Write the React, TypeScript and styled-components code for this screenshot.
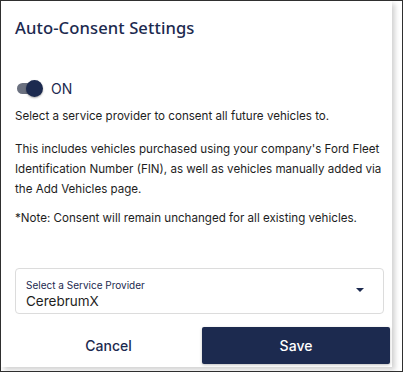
import React, { useState } from 'react';
import styled, { createGlobalStyle } from 'styled-components';

const GlobalStyle = createGlobalStyle`
  html, body {
    margin: 0;
    padding: 0;
    background: #ffffff;
  }
  * { box-sizing: border-box; }
`;

const navy = '#1c2a4f';

const Frame = styled.div`
  width: 403px;
  height: 372px;
  border: 1px solid #2f2f2f;
  background: #ffffff;
  overflow: hidden;
`;

const Card = styled.div`
  width: 391px;
  height: 366px;
  background: #ffffff;
  box-shadow: 3px 3px 5px rgba(0, 0, 0, 0.18);
  padding: 14px 0 0 14px;
  display: flex;
  flex-direction: column;
`;

const Title = styled.h2`
  margin: 0;
  font-family: 'Noto Sans', sans-serif;
  font-size: 16.6px;
  font-weight: 500;
  color: ${navy};
  letter-spacing: 0.1px;
  line-height: 26px;
`;

const ToggleRow = styled.label`
  display: flex;
  align-items: center;
  gap: 12px;
  margin-top: 39px;
  padding-left: 2px;
  cursor: pointer;
`;

const Track = styled.span<{ $on: boolean }>`
  position: relative;
  width: 22px;
  height: 11px;
  border-radius: 6px;
  background: ${(p) => (p.$on ? '#6b7180' : '#c4c6cc')};
  flex: none;
`;

const Knob = styled.span<{ $on: boolean }>`
  position: absolute;
  top: -3px;
  left: ${(p) => (p.$on ? '9px' : '-2px')};
  width: 17px;
  height: 17px;
  border-radius: 50%;
  background: ${navy};
  box-shadow: 0 1px 2px rgba(0, 0, 0, 0.35);
`;

const ToggleText = styled.span`
  font-family: 'Inter', sans-serif;
  font-size: 14px;
  color: ${navy};
`;

const Body = styled.div`
  margin-top: 9px;
  padding-right: 6px;
  font-family: 'Inter', sans-serif;
  font-size: 11.6px;
  line-height: 20px;
  color: #1e1e1e;

  p {
    margin: 0 0 9px;
  }
  p:first-child {
    margin-bottom: 13px;
  }
  p:last-child {
    margin-bottom: 0;
  }
`;

const SelectBox = styled.div`
  margin-top: 40px;
  width: 369px;
  height: 46px;
  border: 1px solid #dcdcdc;
  border-radius: 4px;
  padding: 6px 10px 0 10px;
  display: flex;
  align-items: center;
  justify-content: space-between;
`;

const SelectTexts = styled.div`
  display: flex;
  flex-direction: column;
  font-family: 'Inter', sans-serif;
`;

const SelectLabel = styled.span`
  font-size: 10px;
  color: ${navy};
  line-height: 13px;
`;

const SelectValue = styled.span`
  font-size: 13.5px;
  color: #1e1e1e;
  line-height: 18px;
`;

const Caret = styled.span`
  width: 0;
  height: 0;
  border-left: 4px solid transparent;
  border-right: 4px solid transparent;
  border-top: 4px solid ${navy};
  margin: 0 9px 8px 0;
`;

const Actions = styled.div`
  margin-top: 13px;
  display: grid;
  grid-template-columns: 187px 188px;
  width: 376px;
`;

const Button = styled.button<{ $primary?: boolean }>`
  height: 37px;
  border: none;
  border-radius: 2px;
  font-family: 'Inter', sans-serif;
  font-size: 14px;
  font-weight: 500;
  cursor: pointer;
  background: ${(p) => (p.$primary ? navy : 'transparent')};
  color: ${(p) => (p.$primary ? '#ffffff' : navy)};
  box-shadow: ${(p) => (p.$primary ? '0 1px 3px rgba(0,0,0,0.25)' : 'none')};
`;

export default function App() {
  const [on, setOn] = useState(true);
  return (
    <>
      <GlobalStyle />
      <Frame>
        <Card>
          <Title>Auto-Consent Settings</Title>
          <ToggleRow onClick={() => setOn(!on)}>
            <Track $on={on}>
              <Knob $on={on} />
            </Track>
            <ToggleText>{on ? 'ON' : 'OFF'}</ToggleText>
          </ToggleRow>
          <Body>
            <p>Select a service provider to consent all future vehicles to.</p>
            <p>
              This includes vehicles purchased using your company's Ford Fleet Identification
              Number (FIN), as well as vehicles manually added via the Add Vehicles page.
            </p>
            <p>*Note: Consent will remain unchanged for all existing vehicles.</p>
          </Body>
          <SelectBox>
            <SelectTexts>
              <SelectLabel>Select a Service Provider</SelectLabel>
              <SelectValue>CerebrumX</SelectValue>
            </SelectTexts>
            <Caret />
          </SelectBox>
          <Actions>
            <Button>Cancel</Button>
            <Button $primary>Save</Button>
          </Actions>
        </Card>
      </Frame>
    </>
  );
}
